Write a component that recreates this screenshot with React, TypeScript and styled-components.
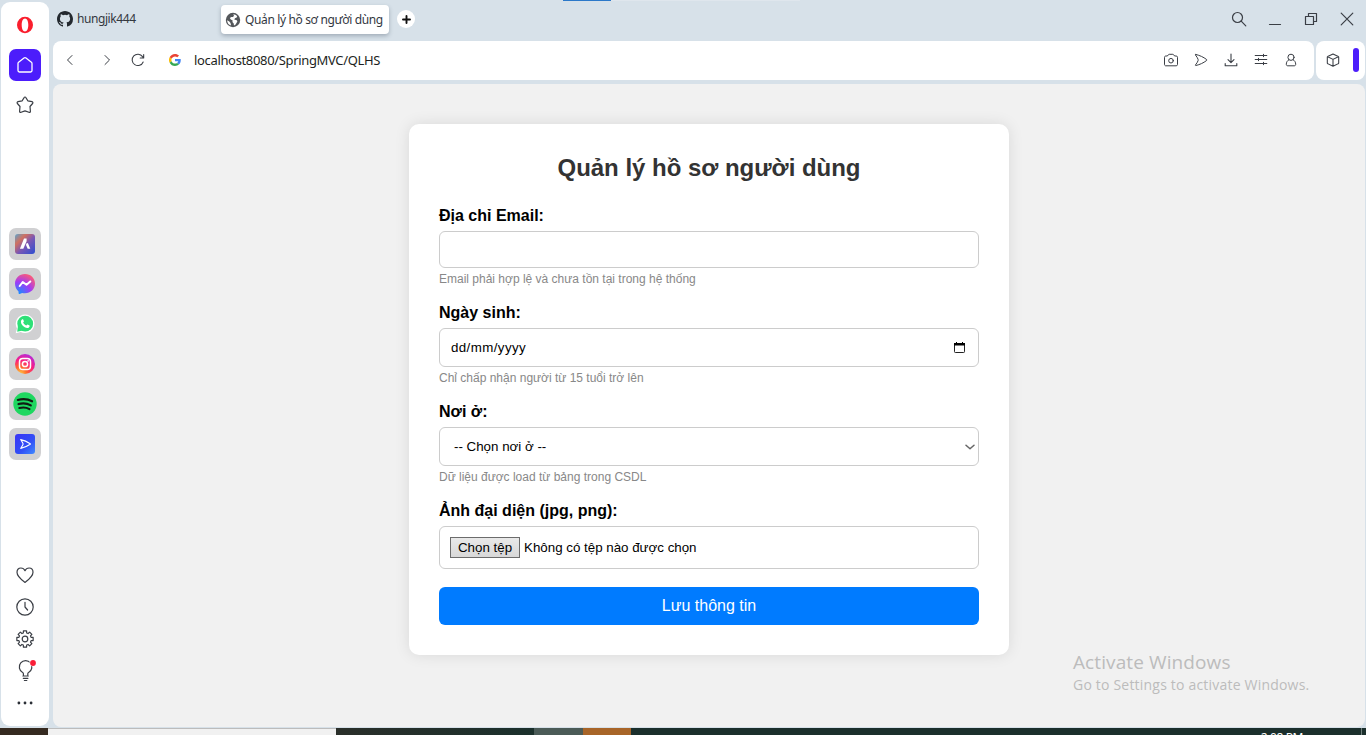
import React from "react";
import styled, { createGlobalStyle } from "styled-components";

const Global = createGlobalStyle`
  * { box-sizing: border-box; }
  body { margin: 0; background: #d7e1e9; overflow: hidden; }
`;

const ui = `"Noto Sans", "Open Sans", sans-serif`;
const arial = `"Liberation Sans", Arial, sans-serif`;

const Screen = styled.div`
  width: 1366px;
  height: 735px;
  display: flex;
  flex-direction: column;
  background: #d7e1e9;
  overflow: hidden;
`;
const Browser = styled.div`
  display: flex;
  height: 728px;
  padding: 2px 1px 1px 1px;
`;
const Sidebar = styled.nav`
  width: 48px;
  height: 724px;
  background: #fff;
  border-radius: 9px;
  display: flex;
  flex-direction: column;
  align-items: center;
`;
const SideSlot = styled.div<{ $h: number }>`
  position: relative;
  width: 48px;
  height: ${(p) => p.$h}px;
  display: flex;
  align-items: center;
  justify-content: center;
  flex: none;
`;
const HomeTile = styled.div`
  width: 32px;
  height: 32px;
  border-radius: 7px;
  background: #4c1dfb;
  display: flex;
  align-items: center;
  justify-content: center;
`;
const AppTile = styled(HomeTile)`
  background: #d0d0d2;
`;
const AppGroup = styled.div`
  margin-top: 96px;
`;
const ToolGroup = styled.div`
  margin-top: auto;
  margin-bottom: 7px;
`;
const Main = styled.div`
  flex: 1;
  margin-left: 4px;
  display: flex;
  flex-direction: column;
`;
const TabBar = styled.div`
  height: 39px;
  display: flex;
  align-items: flex-start;
`;
const Tab = styled.div<{ $active?: boolean }>`
  width: 168px;
  height: 29px;
  margin-top: ${(p) => (p.$active ? 3 : 2)}px;
  padding-left: 4px;
  display: flex;
  align-items: center;
  gap: 4px;
  border-radius: 4px;
  background: ${(p) => (p.$active ? "#fff" : "transparent")};
  box-shadow: ${(p) => (p.$active ? "0 2px 4px rgba(60, 75, 95, 0.35)" : "none")};
  font: 12px/16px ${ui};
  letter-spacing: ${(p) => (p.$active ? -0.36 : -0.42)}px;
  color: #33383f;
  white-space: nowrap;
  svg { flex: none; }
`;
const NewTab = styled.div`
  width: 18px;
  height: 18px;
  margin: 8px 0 0 8px;
  border-radius: 9px;
  background: #fff;
  display: flex;
  align-items: center;
  justify-content: center;
`;
const WindowControls = styled.div`
  margin: -1px 0 0 auto;
  display: flex;
`;
const ControlSlot = styled.div`
  width: 36px;
  height: 36px;
  display: flex;
  align-items: center;
  justify-content: center;
`;
const BarRow = styled.div`
  height: 39px;
  display: flex;
  gap: 2px;
`;
const AddressBar = styled.div`
  width: 1261px;
  height: 39px;
  background: #fff;
  border-radius: 8px;
  display: flex;
  align-items: center;
  padding-bottom: 1px;
`;
const NavSlot = styled.div<{ $w: number }>`
  width: ${(p) => p.$w}px;
  display: flex;
  justify-content: center;
`;
const Favicon = styled.div`
  width: 12px;
  margin-left: 20px;
  display: flex;
`;
const Url = styled.div`
  margin-left: 13px;
  font: 13px/18px ${ui};
  letter-spacing: -0.34px;
  color: #1d1f22;
`;
const Actions = styled.div`
  margin-left: auto;
  margin-right: 8px;
  display: flex;
`;
const SidePanelBar = styled.div`
  width: 49px;
  height: 39px;
  background: #fff;
  border-radius: 8px;
  display: flex;
  align-items: center;
  padding: 0 0 1px 9px;
`;
const Handle = styled.div`
  width: 6px;
  height: 24px;
  margin-left: 12px;
  border-radius: 3px;
  background: #4c1dfb;
`;
const Page = styled.main`
  position: relative;
  height: 643px;
  margin-top: 4px;
  background: #f1f1f1;
  border-radius: 8px;
  display: flex;
  align-items: flex-start;
  justify-content: center;
  padding-top: 40px;
`;
const Card = styled.form`
  width: 600px;
  height: 531px;
  padding: 30px;
  background: #fff;
  border-radius: 10px;
  box-shadow: 0 0 15px rgba(0, 0, 0, 0.1);
  font-family: ${arial};
`;
const Heading = styled.h2`
  margin: 0 0 24px;
  height: 28px;
  font-size: 24px;
  line-height: 28px;
  letter-spacing: -0.02px;
  text-align: center;
  color: #333;
`;
const Group = styled.div`
  margin-bottom: 18px;
`;
const Label = styled.div`
  height: 18px;
  margin-bottom: 7px;
  font-size: 16px;
  font-weight: bold;
  line-height: 20px;
  color: #000;
`;
const Field = styled.div<{ $h: number; $pad?: string }>`
  height: ${(p) => p.$h}px;
  padding: ${(p) => p.$pad ?? "0 11px"};
  border: 1px solid #ccc;
  border-radius: 6px;
  display: flex;
  align-items: center;
  font-size: 13.333px;
  color: #000;
`;
const DateText = styled.span`
  letter-spacing: 0.4px;
`;
const Trailing = styled.span`
  margin-left: auto;
  display: flex;
`;
const Hint = styled.div`
  height: 13px;
  margin-top: 4px;
  font-size: 12px;
  line-height: 14px;
  color: #888;
`;
const FileButton = styled.span`
  width: 70px;
  height: 21px;
  margin-right: 4px;
  border: 1px solid #6c6c6c;
  background: linear-gradient(#e9e9e9, #d8d8d8);
  display: flex;
  align-items: center;
  justify-content: center;
`;
const Submit = styled.div`
  height: 38px;
  border-radius: 6px;
  background: #007bff;
  color: #fff;
  font-size: 16px;
  line-height: 37px;
  text-align: center;
`;
const Watermark = styled.div`
  position: absolute;
  left: 1020px;
  top: 566px;
  color: #bcbcbc;
  font-family: "Open Sans", sans-serif;
  white-space: nowrap;
`;
const WatermarkTitle = styled.div`
  font-size: 19px;
  line-height: 24px;
  letter-spacing: 0.1px;
`;
const WatermarkText = styled.div`
  font-size: 14px;
  line-height: 22px;
  letter-spacing: 0.2px;
`;
const ProgressHint = styled.div`
  position: absolute;
  left: 563px;
  top: 0;
  width: 237px;
  height: 1px;
  background: linear-gradient(90deg, #2b78c9 48px, #dfe6ed 48px);
`;
const Taskbar = styled.footer`
  height: 7px;
  display: flex;
  background: #1b2f2c;
  overflow: hidden;
`;
const TaskPart = styled.div<{ $w: number; $bg: string; $line?: boolean }>`
  width: ${(p) => p.$w}px;
  height: 7px;
  background: ${(p) => p.$bg};
  border-top: ${(p) => (p.$line ? "1px solid #bcbcbc" : "none")};
`;
const Clock = styled.div`
  margin: 3px 58px 0 auto;
  font: 12px/14px ${ui};
  letter-spacing: -0.4px;
  color: #fff;
  white-space: nowrap;
`;
const DesktopEdge = styled.div`
  width: 5px;
  border-left: 1px solid #70807d;
`;

type IconProps = { w?: number; sw?: number; color?: string; box?: number; children: React.ReactNode };
const Icon = ({ w = 18, sw = 1.2, color = "#3a3e45", box = 18, children }: IconProps) => (
  <svg width={w} height={w} viewBox={`0 0 ${box} ${box}`} fill="none" stroke={color} strokeWidth={sw} strokeLinecap="round" strokeLinejoin="round">
    {children}
  </svg>
);

const OperaLogo = () => (
  <svg width="18" height="18" viewBox="0 0 18 18">
    <path fillRule="evenodd" fill="#fa1e2d" d="M9 .8a8 8.200 0 1 1 0 16.400A8 8.200 0 0 1 9 .8zM9 2.500C7 2.500 5.700 5.300 5.700 9S7 15.500 9 15.500s3.300-2.800 3.300-6.500S11 2.500 9 2.500z" />
  </svg>
);
const GithubLogo = () => (
  <svg width="16" height="16" viewBox="0 0 16 16" fill="#24292f">
    <path d="M8 0C3.580 0 0 3.580 0 8c0 3.540 2.290 6.530 5.470 7.590.4.070.55-.17.55-.38 0-.19-.01-.82-.01-1.490-2.010.37-2.530-.49-2.690-.94-.09-.23-.48-.94-.82-1.130-.28-.15-.68-.52-.01-.53.63-.01 1.080.58 1.230.82.72 1.210 1.870.87 2.330.66.07-.52.28-.87.51-1.070-1.780-.2-3.640-.89-3.640-3.950 0-.87.31-1.590.82-2.150-.08-.2-.36-1.020.08-2.120 0 0 .67-.21 2.200.82a7.600 7.600 0 0 1 4 0c1.530-1.040 2.200-.82 2.200-.82.44 1.100.16 1.920.08 2.120.51.56.82 1.270.82 2.150 0 3.070-1.870 3.750-3.650 3.950.29.25.54.73.54 1.480 0 1.070-.01 1.930-.01 2.200 0 .21.15.46.55.38A8 8 0 0 0 16 8c0-4.420-3.580-8-8-8z" />
  </svg>
);
const GlobeIcon = () => (
  <svg width="16" height="16" viewBox="0 0 16 16">
    <circle cx="8" cy="8" r="7.200" fill="#54575b" />
    <path fill="#fff" d="M8.200 2.200c1.500.1 3 .8 4 1.900l-.5 1.500-1.800.7-.5 1.500 2 .2 1 1.300-.9 1.600-1.100 1.900-1.400.6-.3-2-1.300-1.300.3-1.500-1.900-1-1-1.700 1.600-.8 1.700-.2.900-1.300z" />
    <path fill="#fff" d="M2.100 8.200l2.200 1.300 1.200 1.600.6 2.500A6 6 0 0 1 2.100 8.200z" />
  </svg>
);
const GoogleLogo = () => (
  <svg width="12" height="12" viewBox="0 0 48 48">
    <path fill="#EA4335" d="M24 9.500c3.540 0 6.710 1.220 9.210 3.600l6.850-6.850C35.900 2.380 30.470 0 24 0 14.620 0 6.510 5.380 2.560 13.220l7.980 6.190C12.430 13.720 17.740 9.500 24 9.500z" />
    <path fill="#4285F4" d="M46.980 24.550c0-1.570-.15-3.090-.38-4.550H24v9.020h12.940c-.58 2.960-2.260 5.480-4.780 7.180l7.730 6c4.510-4.180 7.090-10.360 7.090-17.650z" />
    <path fill="#FBBC05" d="M10.530 28.590a14.500 14.500 0 0 1 0-9.180l-7.980-6.190a24 24 0 0 0 0 21.560z" />
    <path fill="#34A853" d="M24 48c6.480 0 11.930-2.130 15.890-5.810l-7.730-6c-2.150 1.450-4.920 2.300-8.160 2.300-6.260 0-11.570-4.220-13.470-9.910l-7.980 6.190C6.510 42.620 14.620 48 24 48z" />
  </svg>
);

const AriaLogo = () => (
  <svg width="20" height="20" viewBox="0 0 20 20">
    <defs>
      <linearGradient id="aria" x1="0" y1="0" x2="1" y2="1">
        <stop offset="0" stopColor="#5aa5cf" />
        <stop offset=".28" stopColor="#d0705f" />
        <stop offset=".55" stopColor="#7a56b4" />
        <stop offset="1" stopColor="#2b4ed2" />
      </linearGradient>
    </defs>
    <rect width="20" height="20" rx="3" fill="url(#aria)" />
    <path fill="#fff" d="M9 4.600h2.600v2.600L8.300 14.800H4.900zM11.400 9.600l1.500-.6 2.400 5.800h-2.600l-1.700-3.800z" />
  </svg>
);
const MessengerLogo = () => (
  <svg width="20" height="20" viewBox="0 0 20 20">
    <defs>
      <radialGradient id="msg" cx=".2" cy="1" r="1.100">
        <stop offset="0" stopColor="#1292ff" />
        <stop offset=".55" stopColor="#a13bf7" />
        <stop offset="1" stopColor="#ff5c72" />
      </radialGradient>
    </defs>
    <path fill="url(#msg)" d="M10 0c5.700 0 10 4.100 10 9.600s-4.300 9.700-10 9.700c-1 0-2-.1-2.900-.4l-2.500 1c-.6.300-1-.1-1-.6l-.1-1.900C1.300 15.700 0 12.900 0 9.600 0 4.100 4.300 0 10 0z" />
    <path d="M4.700 12l3-4 3.800 2.800 3.800-3.300" fill="none" stroke="#fff" strokeWidth="2" strokeLinecap="round" strokeLinejoin="round" />
  </svg>
);
const WhatsappLogo = () => (
  <svg width="20" height="20" viewBox="0 0 20 20">
    <path fill="#fff" d="M10.200.5a9.300 9.300 0 1 1-4.500 17.500L.7 19.300 2 14.400A9.300 9.300 0 0 1 10.200.5z" />
    <circle cx="10.200" cy="9.700" r="7.900" fill="#2ee077" />
    <path fill="#2ee077" d="M3 12l-.8 5.700 5.500-1.300z" />
    <path fill="#fff" d="M7.200 5.300c.4-.2.800-.1 1 .3l.7 1.700c.1.400-.6 1-.8 1.300.7 1.400 1.700 2.300 3.200 3 .4-.2.900-1.100 1.300-1l1.900.9c.4.300 0 1.600-.6 2-1.900 1.300-4.600-.2-6.100-1.700C6.200 10.200 4.900 7 7.200 5.300z" />
  </svg>
);
const InstagramLogo = () => (
  <svg width="20" height="20" viewBox="0 0 20 20">
    <defs>
      <radialGradient id="insta" cx=".25" cy="1" r="1.150">
        <stop offset="0" stopColor="#ffce45" />
        <stop offset=".3" stopColor="#ff6a2c" />
        <stop offset=".6" stopColor="#fb1f80" />
        <stop offset="1" stopColor="#a32df0" />
      </radialGradient>
    </defs>
    <circle cx="10" cy="10" r="10" fill="url(#insta)" />
    <rect x="4.500" y="4.500" width="11" height="11" rx="3.300" fill="none" stroke="#fff" strokeWidth="1.500" />
    <circle cx="10" cy="10" r="2.600" fill="none" stroke="#fff" strokeWidth="1.500" />
    <circle cx="13.100" cy="6.900" r=".8" fill="#fff" />
  </svg>
);
const SpotifyLogo = () => (
  <svg width="24" height="24" viewBox="0 0 24 24">
    <circle cx="12" cy="12" r="11.700" fill="#1ed760" />
    <path d="M4.800 8c5-1.400 10-1 14.300 1.300M5.500 12.100c4.300-1.200 8.600-.8 12.300 1.300M6.300 16c3.700-.9 7.200-.6 10.200 1.100" fill="none" stroke="#101b12" strokeWidth="2.100" strokeLinecap="round" />
  </svg>
);
const PlayerLogo = () => (
  <svg width="20" height="20" viewBox="0 0 20 20">
    <defs>
      <linearGradient id="player" x1="0" y1="0" x2="1" y2="1">
        <stop offset="0" stopColor="#3a34f5" />
        <stop offset=".6" stopColor="#3150f6" />
        <stop offset="1" stopColor="#3f8bff" />
      </linearGradient>
    </defs>
    <rect width="20" height="20" rx="3" fill="url(#player)" />
    <path d="M5.700 5.600c3.500.7 6.600 2.100 9.500 4.100.3.200.3.400 0 .6-2.900 2-6 3.400-9.500 4.100L8 10.400v-.8z" fill="none" stroke="#fff" strokeWidth="1.100" strokeLinejoin="round" />
  </svg>
);

const apps = [AriaLogo, MessengerLogo, WhatsappLogo, InstagramLogo, SpotifyLogo, PlayerLogo];

const gear = (() => {
  const pts: string[] = [];
  for (let i = 0; i < 8; i++) {
    const a = (i * Math.PI) / 4;
    [[-0.27, 6.3], [-0.19, 8.3], [0.19, 8.3], [0.27, 6.3]].forEach(([d, r]) => {
      pts.push(`${(9 + r * Math.sin(a + d)).toFixed(2)} ${(9 - r * Math.cos(a + d)).toFixed(2)}`);
    });
  }
  return `M${pts.join("L")}Z`;
})();

export default function App() {
  return (
    <Screen>
      <Global />
      <ProgressHint />
      <Browser>
        <Sidebar>
          <SideSlot $h={46}><OperaLogo /></SideSlot>
          <SideSlot $h={34}>
            <HomeTile>
              <Icon color="#fff" sw={1.3}>
                <path d="M8 2.100L2.600 6.300c-.4.300-.6.700-.6 1.200v7.100c0 .8.600 1.400 1.400 1.400h11.200c.8 0 1.400-.6 1.400-1.400V7.500c0-.5-.2-.9-.6-1.200L10 2.100a1.600 1.600 0 0 0-2 0z" />
              </Icon>
            </HomeTile>
          </SideSlot>
          <SideSlot $h={46}>
            <Icon>
              <path d="M8.100 1.600c.4-.8 1.400-.8 1.800 0l1.900 3.200 4.200.9c.9.200 1.200 1.100.6 1.800l-2.600 3 .4 4.700c.1.900-.7 1.500-1.500 1.100L9 14.900l-3.900 1.400c-.8.400-1.600-.2-1.500-1.100l.4-4.700-2.600-3C.8 6.800 1.100 5.900 2 5.700l4.200-.9z" />
            </Icon>
          </SideSlot>
          <AppGroup>
            {apps.map((Logo, i) => (
              <SideSlot key={i} $h={40}><AppTile><Logo /></AppTile></SideSlot>
            ))}
          </AppGroup>
          <ToolGroup>
            <SideSlot $h={32}>
              <Icon>
                <path d="M9 16.400C5.500 13.800 1 10.700 1 6.300 1 3.700 2.700 2 4.900 2 6.700 2 8.200 3 9 4.700 9.800 3 11.300 2 13.100 2 15.300 2 17 3.700 17 6.300c0 4.400-4.500 7.500-8 10.100z" />
              </Icon>
            </SideSlot>
            <SideSlot $h={32}>
              <Icon><circle cx="9" cy="9" r="8.200" /><path d="M9 4.300V9l2.600 3" /></Icon>
            </SideSlot>
            <SideSlot $h={32}>
              <Icon><path d={gear} /><circle cx="9" cy="9" r="2.800" /></Icon>
            </SideSlot>
            <SideSlot $h={32}>
              <Icon w={22} box={22}>
                <path d="M9.400 14.900v-1.100c0-.6-.3-1-.8-1.300a6.300 6.300 0 1 1 6 0c-.5.3-.8.7-.8 1.300v1.100M8.900 16h5.400M9.300 18.300h4.600M10.400 20.500h2.400" />
                <circle cx="19" cy="3" r="3.600" fill="#fff" stroke="none" />
                <circle cx="19" cy="3" r="2.900" fill="#fa1e37" stroke="none" />
              </Icon>
            </SideSlot>
            <SideSlot $h={32}>
              <Icon>
                <g fill="#2b2f36" stroke="none"><circle cx="2.900" cy="9" r="1.400" /><circle cx="9" cy="9" r="1.400" /><circle cx="15.100" cy="9" r="1.400" /></g>
              </Icon>
            </SideSlot>
          </ToolGroup>
        </Sidebar>
        <Main>
          <TabBar>
            <Tab><GithubLogo />hungjik444</Tab>
            <Tab $active><GlobeIcon />Quản lý hồ sơ người dùng</Tab>
            <NewTab><Icon w={9} box={9} sw={1.9} color="#111"><path d="M4.500 1v7M1 4.500h7" /></Icon></NewTab>
            <WindowControls>
              <ControlSlot><Icon w={16} box={16}><circle cx="6.500" cy="6.500" r="5" /><path d="M10.200 10.200l4.600 4.600" /></Icon></ControlSlot>
              <ControlSlot><Icon w={14} box={14}><path d="M1.500 12.500h11" /></Icon></ControlSlot>
              <ControlSlot><Icon w={14} box={14}><path d="M1.500 4.500h8v8h-8zM4.500 4.500v-3h8v8h-3" /></Icon></ControlSlot>
              <ControlSlot><Icon w={14} box={14}><path d="M1.200 1.200l11.600 11.600M12.800 1.200L1.200 12.800" /></Icon></ControlSlot>
            </WindowControls>
          </TabBar>
          <BarRow>
            <AddressBar>
              <NavSlot $w={34}><Icon sw={1}><path d="M11 4.500L6.500 9l4.500 4.500" /></Icon></NavSlot>
              <NavSlot $w={40}><Icon sw={1}><path d="M7 4.500L11.500 9 7 13.500" /></Icon></NavSlot>
              <NavSlot $w={22}><Icon w={16} box={18}><path d="M14.800 11.200a6.400 6.400 0 1 1-.7-6l1 1.300M15.400 2.800v3.900h-3.900" /></Icon></NavSlot>
              <Favicon><GoogleLogo /></Favicon>
              <Url>localhost8080/SpringMVC/QLHS</Url>
              <Actions>
                <NavSlot $w={30}><Icon sw={1}><path d="M2.500 6.300c0-.8.500-1.300 1.300-1.300h1.600l1-1.300c.2-.3.500-.4.800-.4h3.600c.3 0 .6.100.8.400l1 1.300h1.600c.8 0 1.300.5 1.300 1.300v7.200c0 .8-.5 1.300-1.300 1.300H3.800c-.8 0-1.300-.5-1.300-1.300z" /><circle cx="9" cy="9.700" r="2.300" /></Icon></NavSlot>
                <NavSlot $w={30}><Icon sw={1}><path d="M3.900 3.500c4 .9 7.500 2.600 10.700 5 .3.300.3.700 0 1-3.200 2.400-6.700 4.100-10.700 5-.5.100-.7-.3-.4-.7 1.200-1.400 2.100-2.700 2.600-4.200v-1.200c-.5-1.500-1.400-2.800-2.600-4.200-.3-.4-.1-.8.4-.7z" /></Icon></NavSlot>
                <NavSlot $w={30}><Icon sw={1.1}><path d="M9 3v8.500M6 8.700l3 3 3-3M3.200 12.500v2.300h11.600v-2.300" /></Icon></NavSlot>
                <NavSlot $w={30}><Icon sw={1}><path d="M3.200 4.500h11.600M3.200 8.500h11.600M3.200 12.500h11.600M11.500 3.300v2.400M6.500 7.300v2.400M11.500 11.300v2.400" /></Icon></NavSlot>
                <NavSlot $w={30}><Icon sw={1}><circle cx="9" cy="6.300" r="3.100" /><path d="M6.900 8.700c-1.700.9-2.600 2.600-2.600 4.600 0 1 .6 1.500 1.600 1.500h6.200c1 0 1.600-.5 1.600-1.500 0-2-.9-3.700-2.600-4.600" /></Icon></NavSlot>
              </Actions>
            </AddressBar>
            <SidePanelBar>
              <Icon w={16} box={18}><path d="M9 2.200l6 2.900c.3.100.4.300.4.600v6.800c0 .3-.1.500-.4.600l-6 2.900-6-2.900c-.3-.1-.4-.3-.4-.6V5.700c0-.3.100-.5.400-.6zM3 5.400L9 8.300l6-2.900M9 8.300V16" /></Icon>
              <Handle />
            </SidePanelBar>
          </BarRow>
          <Page>
            <Card>
              <Heading>Quản lý hồ sơ người dùng</Heading>
              <Group>
                <Label>Địa chỉ Email:</Label>
                <Field $h={37} />
                <Hint>Email phải hợp lệ và chưa tồn tại trong hệ thống</Hint>
              </Group>
              <Group>
                <Label>Ngày sinh:</Label>
                <Field $h={39}>
                  <DateText>dd/mm/yyyy</DateText>
                  <Trailing>
                    <svg width="14" height="14" viewBox="0 0 14 14">
                      <rect x="1.500" y="2.500" width="10" height="9" rx=".8" fill="none" stroke="#222" />
                      <path d="M1 2h11v2.500H1zM3 1h1v1H3zM9 1h1v1H9z" />
                    </svg>
                  </Trailing>
                </Field>
                <Hint>Chỉ chấp nhận người từ 15 tuổi trở lên</Hint>
              </Group>
              <Group>
                <Label>Nơi ở:</Label>
                <Field $h={39} $pad="0 3px 0 14px">
                  <span>-- Chọn nơi ở --</span>
                  <Trailing><Icon w={10} box={10} sw={1.5} color="#666"><path d="M1 3.200l4 3.600 4-3.600" /></Icon></Trailing>
                </Field>
                <Hint>Dữ liệu được load từ bảng trong CSDL</Hint>
              </Group>
              <Group>
                <Label>Ảnh đại diện (jpg, png):</Label>
                <Field $h={43} $pad="0 10px">
                  <FileButton>Chọn tệp</FileButton>
                  <span>Không có tệp nào được chọn</span>
                </Field>
              </Group>
              <Submit>Lưu thông tin</Submit>
            </Card>
            <Watermark>
              <WatermarkTitle>Activate Windows</WatermarkTitle>
              <WatermarkText>Go to Settings to activate Windows.</WatermarkText>
            </Watermark>
          </Page>
        </Main>
      </Browser>
      <Taskbar>
        <TaskPart $w={48} $bg="#352a20" />
        <TaskPart $w={288} $bg="#f1f1f1" $line />
        <TaskPart $w={198} $bg="linear-gradient(90deg, #2a2f2a, #1b302c)" />
        <TaskPart $w={49} $bg="#4b5b57" />
        <TaskPart $w={48} $bg="#a86528" />
        <Clock>2:08 PM</Clock>
        <DesktopEdge />
      </Taskbar>
    </Screen>
  );
}
